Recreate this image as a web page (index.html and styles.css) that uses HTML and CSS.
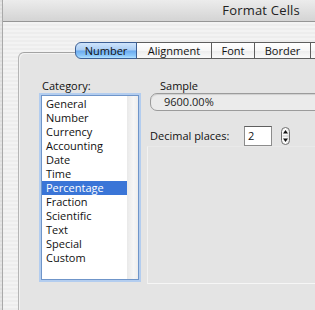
FILE: index.html
```html
<!DOCTYPE html>
<html lang="en">
<head>
  <meta charset="UTF-8" />
  <title>Format Cells</title>
  <link rel="stylesheet" href="styles.css">
</head>
<body>
  <div class="edge"></div>

  <div class="window">
    <div class="titlebar">Format Cells</div>

    <div class="tabs">
      <div class="tab tab-number active">Number</div>
      <div class="tab tab-align">Alignment</div>
      <div class="tab tab-font">Font</div>
      <div class="tab tab-border">Border</div>
      <div class="tab tab-more"></div>
    </div>

    <div class="tabbox">
      <div class="left-col">
        <div class="label">Category:</div>
        <div class="list">
          <ul class="items">
            <li>General</li>
            <li>Number</li>
            <li>Currency</li>
            <li>Accounting</li>
            <li>Date</li>
            <li>Time</li>
            <li class="selected">Percentage</li>
            <li>Fraction</li>
            <li>Scientific</li>
            <li>Text</li>
            <li>Special</li>
            <li>Custom</li>
          </ul>
          <div class="scroll-strip"></div>
        </div>
      </div>

      <div class="right-col">
        <div class="label sample-label">Sample</div>
        <div class="sample-field">9600.00%</div>

        <div class="decimal-row">
          <span class="decimal-label">Decimal places:</span>
          <div class="decimal-input">2</div>
          <svg class="stepper" width="9" height="18" viewBox="0 0 9 18">
            <defs>
              <linearGradient id="stepfill" x1="0" y1="0" x2="1" y2="0">
                <stop offset="0" stop-color="#f4f4f4"/>
                <stop offset="0.5" stop-color="#ffffff"/>
                <stop offset="1" stop-color="#e2e2e2"/>
              </linearGradient>
            </defs>
            <rect x="0.5" y="0.5" width="8" height="17" rx="4" fill="url(#stepfill)" stroke="#6e6e6e"/>
            <line x1="1.5" y1="9" x2="7.5" y2="9" stroke="#c8c8c8"/>
            <polygon points="4.5,3 7,6.5 2,6.5" fill="#111"/>
            <polygon points="2,11.5 7,11.5 4.5,15" fill="#111"/>
          </svg>
        </div>

        <div class="options-box"></div>
      </div>
    </div>
  </div>
</body>
</html>
```

FILE: styles.css
```css
body {
  margin: 0;
  width: 315px;
  height: 310px;
  overflow: hidden;
  display: flex;
  font-family: 'Open Sans', 'DejaVu Sans', sans-serif;
  font-size: 11px;
  color: #111;
  background: #e4e4e4;
}

.edge {
  width: 2px;
  flex-shrink: 0;
  background: repeating-linear-gradient(to bottom, #dedede 0 2px, #e6e6e6 2px 4px);
}

.window {
  flex: 1;
  min-width: 0;
  overflow: hidden;
  border-left: 1px solid #a9a9a9;
  background: repeating-linear-gradient(to bottom, #ededed 0 2px, #f3f3f3 2px 4px);
}

.titlebar {
  height: 21px;
  line-height: 21px;
  border-bottom: 1px solid #959595;
  border-top-left-radius: 5px;
  background: linear-gradient(to bottom, #ececec, #d4d4d4);
  text-align: right;
  padding-right: 15px;
  font-size: 13px;
  letter-spacing: 0.2px;
  color: #222;
}

/* tabs */

.tabs {
  position: relative;
  z-index: 1;
  display: flex;
  margin-top: 20px;
  padding-left: 72px;
  height: 17px;
}

.tab {
  box-sizing: border-box;
  flex-shrink: 0;
  height: 17px;
  line-height: 15px;
  border: 1px solid #5e5e5e;
  margin-left: -1px;
  text-align: center;
  background: linear-gradient(to bottom, #ffffff 0%, #f7f7f7 50%, #ececec 51%, #fafafa 100%);
  color: #111;
}

.tab-number { width: 62px; margin-left: 0; }
.tab-align { width: 76px; }
.tab-font { width: 44px; }
.tab-border { width: 57px; }
.tab-more { width: 60px; }

.tab.active {
  border-color: #3c5f94;
  border-top-left-radius: 6px;
  border-bottom-left-radius: 6px;
  background: linear-gradient(to bottom, #cfe4fb 0%, #a9cdf4 48%, #6aaaee 52%, #8ec9fb 85%, #b6e4ff 100%);
  position: relative;
  z-index: 1;
}

/* tab box */

.tabbox {
  box-sizing: border-box;
  display: flex;
  width: 330px;
  height: 280px;
  margin: -7px 0 0 15px;
  padding: 26px 0 0 22px;
  border-top: 1px solid #a3a3a3;
  border-left: 1px solid #b5b5b5;
  border-top-left-radius: 6px;
  background: #e4e4e4;
  box-shadow: inset 1px 1px 0 #f2f2f2;
}

.label {
  line-height: 14px;
  height: 14px;
  padding-left: 1px;
}

.left-col {
  width: 98px;
  flex-shrink: 0;
}

.list {
  box-sizing: border-box;
  display: flex;
  height: 185px;
  margin-top: 2px;
  border: 1px solid #6f95c9;
  box-shadow: 0 0 0 2px #b3cdef;
  background: #fff;
}

.items {
  list-style: none;
  margin: 0;
  padding: 1px 0 0;
  width: 85px;
}

.items li {
  height: 14px;
  line-height: 14px;
  padding-left: 4px;
  white-space: nowrap;
}

.items li.selected {
  background: #3a75d7;
  color: #fff;
}

.scroll-strip {
  flex: 1;
  background: linear-gradient(to right, #e9e9e9, #f6f6f6 60%, #ededed);
}

/* right column */

.right-col {
  flex: 1;
  margin-left: 11px;
}

.sample-label {
  padding-left: 10px;
}

.sample-field {
  box-sizing: border-box;
  height: 18px;
  padding: 1px 0 0 13px;
  line-height: 13px;
  border: 1px solid #9b9b9b;
  border-radius: 7px 0 0 7px;
  background: #ebebeb;
  box-shadow: inset 0 1px 1px #cfcfcf;
  color: #222;
}

.decimal-row {
  display: flex;
  align-items: center;
  height: 20px;
  margin-top: 15px;
}

.decimal-label {
  width: 94px;
  line-height: 14px;
}

.decimal-input {
  box-sizing: border-box;
  width: 28px;
  height: 20px;
  line-height: 18px;
  padding-left: 3px;
  border: 1px solid #8c8c8c;
  border-top-color: #5f5f5f;
  background: #fff;
}

.stepper {
  display: block;
  margin-left: 9px;
}

.options-box {
  box-sizing: border-box;
  height: 138px;
  margin-left: -3px;
  border-top: 1px solid #e9e9e9;
  border-left: 1px solid #f2f2f2;
  border-bottom: 1px solid #f6f6f6;
}
```
